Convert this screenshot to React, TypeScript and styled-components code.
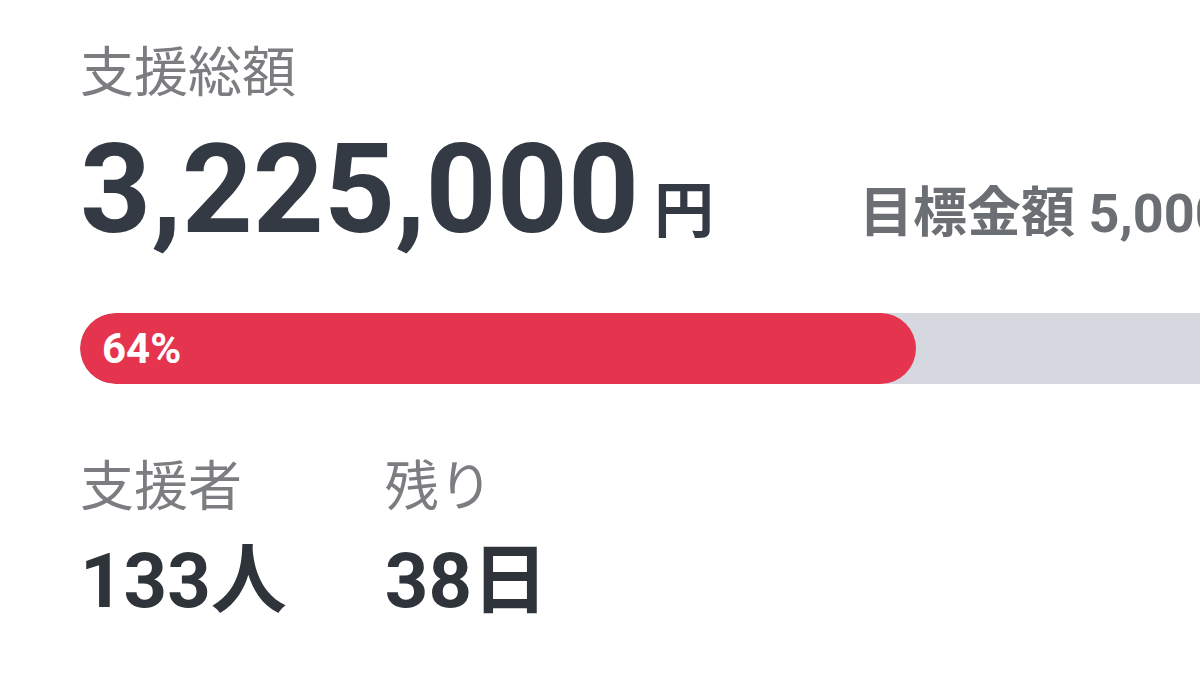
import React from "react";
import styled, { createGlobalStyle } from "styled-components";

const GlobalStyle = createGlobalStyle`
  html, body {
    margin: 0;
    padding: 0;
    background: #ffffff;
    overflow: hidden;
  }
  body {
    font-family: Roboto, "Noto Sans CJK JP", sans-serif;
  }
`;

const Panel = styled.section`
  width: 1306px;
  padding: 42px 0 0 80px;
  display: flex;
  flex-direction: column;
`;

const Label = styled.div`
  font-family: "Noto Sans CJK JP", sans-serif;
  font-size: 54px;
  line-height: 1;
  color: #7b7d80;
`;

const AmountRow = styled.div`
  margin-top: 32px;
  display: flex;
  align-items: baseline;
  justify-content: space-between;
  white-space: nowrap;
`;

const Amount = styled.div`
  display: flex;
  align-items: baseline;
  color: #333a44;
`;

const Figure = styled.span<{ $size: number }>`
  font-family: Roboto, sans-serif;
  font-weight: 700;
  font-size: ${(p) => p.$size}px;
  line-height: 1;
`;

const Unit = styled.span<{ $size: number; $gap?: number }>`
  font-family: "Noto Sans CJK JP", sans-serif;
  font-weight: 700;
  font-size: ${(p) => p.$size}px;
  line-height: 1;
  margin-left: ${(p) => p.$gap ?? 0}px;
`;

const Goal = styled.span`
  font-family: Roboto, "Noto Sans CJK JP", sans-serif;
  font-size: 54px;
  font-weight: 700;
  line-height: 1;
  color: #6b6e73;
`;

const Track = styled.div`
  margin-top: 61px;
  height: 71px;
  border-radius: 36px;
  background: #d5d8de;
  overflow: hidden;
  display: flex;
`;

const Fill = styled.div`
  height: 100%;
  border-radius: 36px;
  background: #e5344d;
  display: flex;
  align-items: center;
  padding-left: 22px;
  box-sizing: border-box;
  color: #ffffff;
  font-family: Roboto, sans-serif;
  font-weight: 700;
  font-size: 42px;
`;

const Stats = styled.div`
  margin-top: 72px;
  display: flex;
  gap: 98px;
`;

const Stat = styled.div`
  display: flex;
  flex-direction: column;
  gap: 26px;
`;

const Value = styled.div`
  display: flex;
  align-items: baseline;
  color: #2f343b;
`;

export default function App() {
  const percent = 64;
  return (
    <>
      <GlobalStyle />
      <Panel>
        <Label>支援総額</Label>
        <AmountRow>
          <Amount>
            <Figure $size={124}>3,225,000</Figure>
            <Unit $size={60} $gap={15}>円</Unit>
          </Amount>
          <Goal>目標金額 5,000,000円</Goal>
        </AmountRow>
        <Track>
          <Fill style={{ width: `${percent}%` }}>{percent}%</Fill>
        </Track>
        <Stats>
          <Stat>
            <Label>支援者</Label>
            <Value>
              <Figure $size={76}>133</Figure>
              <Unit $size={76}>人</Unit>
            </Value>
          </Stat>
          <Stat>
            <Label>残り</Label>
            <Value>
              <Figure $size={76}>38</Figure>
              <Unit $size={76}>日</Unit>
            </Value>
          </Stat>
        </Stats>
      </Panel>
    </>
  );
}
